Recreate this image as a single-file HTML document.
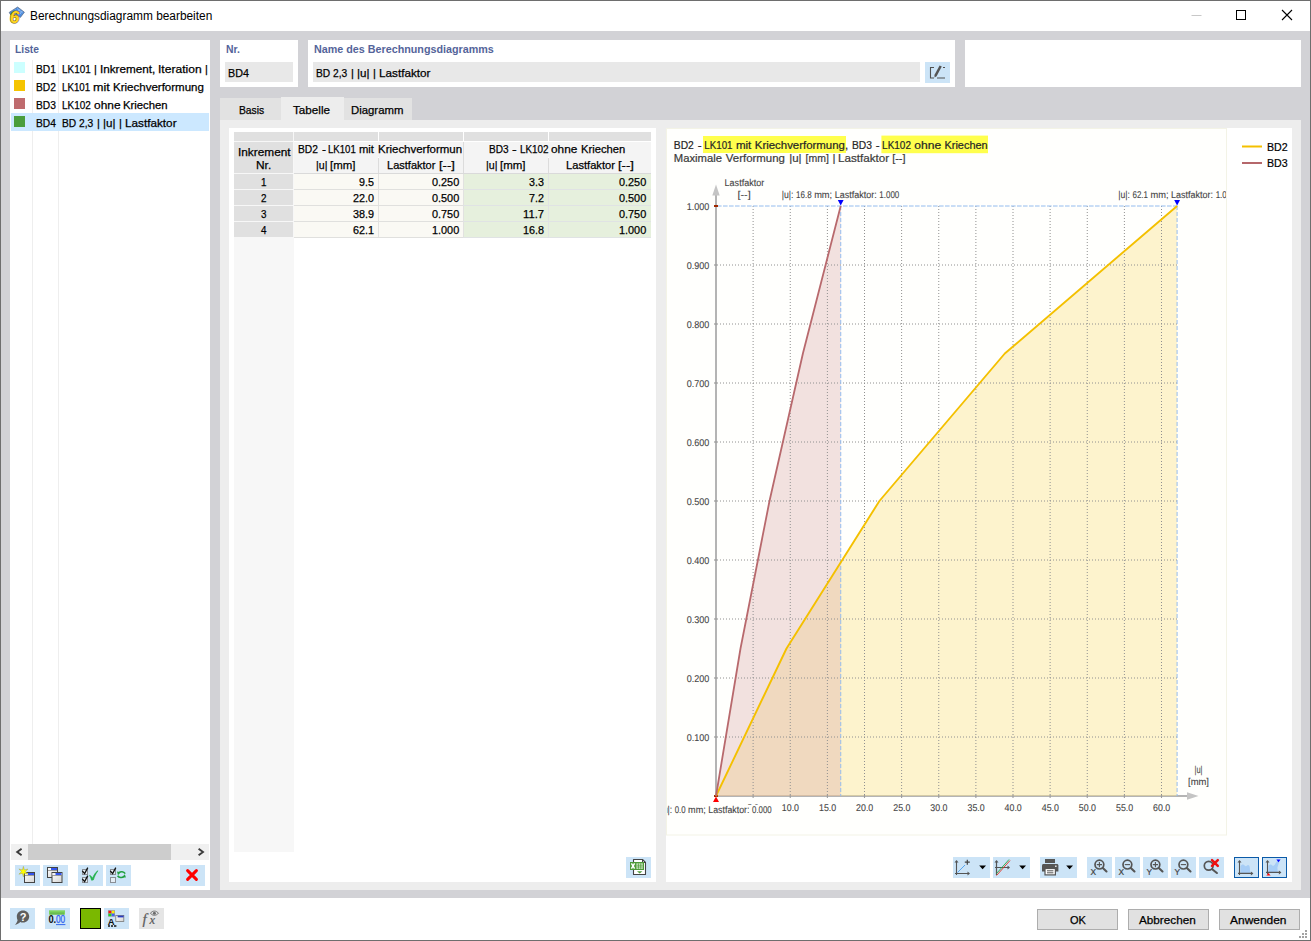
<!DOCTYPE html>
<html lang="de">
<head>
<meta charset="utf-8">
<title>Berechnungsdiagramm bearbeiten</title>
<style>
*{box-sizing:border-box;margin:0;padding:0}
html,body{width:1311px;height:941px;overflow:hidden;background:#fff}
body{font-family:"Liberation Sans",sans-serif;font-size:11.5px;color:#000;position:relative}
.a{position:absolute}
#win{position:absolute;left:0;top:0;width:1311px;height:941px;background:#fff;overflow:hidden}
#main{position:absolute;left:1px;top:31px;width:1309px;height:867px;background:#d2d2d6}
.p{position:absolute;background:#fff}
.t{position:absolute;white-space:nowrap;line-height:16px;height:16px;-webkit-text-stroke:0.25px currentColor}
.w{display:inline-block;transform-origin:0 0;vertical-align:baseline}
.b{font-weight:bold;-webkit-text-stroke:0}
.ns{-webkit-text-stroke:0}
.lbl{color:#54649a}
.inp{position:absolute;background:#e8e8e8;height:20px}
.btn{position:absolute;background:#cce4f7;width:25px;height:21px}
.btn svg,.ic svg{position:absolute;left:0;top:0}
.pbtn{position:absolute;top:909px;width:81px;height:21px;background:#e1e1e1;border:1px solid #adadad}
.tab{position:absolute;top:98px;height:22px;background:#e2e2e2}
.row{position:absolute;left:11px;width:198px;height:18px}
.sq{position:absolute;left:14px;width:11px;height:11px}
.hc{position:absolute;background:#f4f4f4}
.rc{position:absolute;background:#e0e0e0}
.c1{position:absolute;background:#faf9f4}
.c2{position:absolute;background:#e6f0dd}
svg text{font-family:"Liberation Sans",sans-serif;stroke-width:.22px}
svg text.sm{stroke-width:.1px;text-rendering:geometricPrecision}
svg text.sf{font-family:"Liberation Serif",serif}
</style>
</head>
<body>
<div id="win">
<!-- title bar -->
<div class="a ic" id="appicon" style="left:8px;top:6px;width:18px;height:18px"><svg width="18" height="18" viewBox="0 0 18 18"><path d="M1.2 6.4L9.6 1L16.4 6.2L12.4 11.4L8 8.6L3 9.4Z" fill="#4a8be0" stroke="#5a6a80" stroke-width="0.7" stroke-linejoin="round"/><path d="M4.6 5.2L11 8.6M6.8 3.6L13.2 8M9 2.4L14.6 6.8M12.2 3.4L7 7.6M14.4 5L10 9.4" stroke="#a8ccf4" stroke-width="0.7" fill="none"/><text x="1.8" y="16.7" font-size="17" font-weight="bold" font-style="italic" fill="#ffd51e" stroke="#6e5c14" style="stroke-width:1.1px" paint-order="stroke">6</text></svg></div>
<div class="t ns" style="left:30.40px;top:7.84px;font-size:12px"><span class="w" style="width:182.20px;transform:scaleX(0.990)">Berechnungsdiagramm bearbeiten</span></div>
<svg class="a" style="left:1180px;top:1px;width:130px;height:30px" viewBox="0 0 130 30"><path d="M11.5 14.5h10" stroke="#c8c8c8" stroke-width="1" fill="none"/><rect x="56.5" y="9.5" width="9" height="9" stroke="#000" stroke-width="1" fill="none"/><path d="M102 9l10 10M112 9l-10 10" stroke="#000" stroke-width="1.1" fill="none"/></svg>
<div id="main"></div>
<!-- list panel -->
<div class="p" style="left:10px;top:40px;width:200px;height:850px"></div>
<div class="t b lbl" style="left:15.00px;top:41.12px;font-size:11.2px"><span class="w" style="width:24.00px;transform:scaleX(0.918)">Liste</span></div>
<div class="a" style="left:32px;top:60px;width:1px;height:784px;background:#eeeeee"></div>
<div class="a" style="left:58px;top:60px;width:1px;height:784px;background:#eeeeee"></div>
<div class="row" style="top:113px;background:#cce8ff"></div>
<div class="sq" style="top:62px;background:#ccffff"></div>
<div class="t" style="left:35.70px;top:61.02px"><span class="w" style="width:19.90px;transform:scaleX(0.890)">BD1</span></div>
<div class="t" style="left:61.70px;top:61.02px"><span class="w" style="width:28.70px;transform:scaleX(0.863)">LK101</span> <span class="w" style="margin-left:0.04px;width:2.82px;transform:scaleX(0.945)">|</span> <span class="w" style="margin-left:0.04px;width:55.29px;transform:scaleX(1.018)">Inkrement,</span> <span class="w" style="margin-left:0.04px;width:43.63px;transform:scaleX(1.050)">Iteration</span> <span class="w" style="margin-left:0.04px;width:2.82px;transform:scaleX(0.945)">|</span></div>
<div class="sq" style="top:80px;background:#f5c400"></div>
<div class="t" style="left:35.70px;top:79.02px"><span class="w" style="width:19.90px;transform:scaleX(0.890)">BD2</span></div>
<div class="t" style="left:61.70px;top:79.02px"><span class="w" style="width:28.17px;transform:scaleX(0.847)">LK101</span> <span class="w" style="margin-left:-0.02px;width:16.70px;transform:scaleX(1.090)">mit</span> <span class="w" style="margin-left:-0.02px;width:90.98px;transform:scaleX(1.002)">Kriechverformung</span></div>
<div class="sq" style="top:98px;background:#bf6b6e"></div>
<div class="t" style="left:35.70px;top:97.02px"><span class="w" style="width:19.90px;transform:scaleX(0.890)">BD3</span></div>
<div class="t" style="left:61.70px;top:97.02px"><span class="w" style="width:28.79px;transform:scaleX(0.866)">LK102</span> <span class="w" style="margin-left:0.05px;width:26.51px;transform:scaleX(1.036)">ohne</span> <span class="w" style="margin-left:0.05px;width:44.61px;transform:scaleX(0.983)">Kriechen</span></div>
<div class="sq" style="top:116px;background:#4a9d3c"></div>
<div class="t" style="left:35.70px;top:115.02px"><span class="w" style="width:19.90px;transform:scaleX(0.890)">BD4</span></div>
<div class="t" style="left:61.70px;top:115.02px"><span class="w" style="width:14.21px;transform:scaleX(0.890)">BD</span> <span class="w" style="margin-left:0.09px;width:14.23px;transform:scaleX(0.890)">2,3</span> <span class="w" style="margin-left:0.09px;width:2.87px;transform:scaleX(0.960)">|</span> <span class="w" style="margin-left:0.09px;width:12.52px;transform:scaleX(1.012)">|u|</span> <span class="w" style="margin-left:0.09px;width:2.87px;transform:scaleX(0.960)">|</span> <span class="w" style="margin-left:0.09px;width:51.57px;transform:scaleX(1.021)">Lastfaktor</span></div>
<div class="a" style="left:11px;top:844px;width:198px;height:16px;background:#f0f0f0"></div>
<div class="a" style="left:28px;top:844px;width:143px;height:16px;background:#cdcdcd"></div>
<svg class="a" style="left:11px;top:844px;width:198px;height:16px" viewBox="0 0 198 16"><path d="M10.6 4.7L6.2 8l4.4 3.3M187.6 4.7L192 8l-4.4 3.3" stroke="#3c3c3c" stroke-width="1.9" fill="none"/></svg>
<div class="btn" style="left:15px;top:865px"><svg width="25" height="21" viewBox="0 0 25 21"><defs><linearGradient id="wg" x1="0" y1="0" x2="1" y2="1"><stop offset="0" stop-color="#ffffff"/><stop offset="1" stop-color="#d4d4d4"/></linearGradient></defs><rect x="9.5" y="7.5" width="10" height="10" fill="url(#wg)" stroke="#444" stroke-width="1"/><rect x="10" y="8" width="9" height="2" fill="#f4f4f4"/><rect x="13" y="8" width="6" height="2" fill="#3355ee"/><rect x="10" y="10" width="9" height="0.6" fill="#666"/><polygon points="8.40,1.40 9.35,4.95 12.90,4.00 10.30,6.60 12.90,9.20 9.35,8.25 8.40,11.80 7.45,8.25 3.90,9.20 6.50,6.60 3.90,4.00 7.45,4.95" fill="#ffff00" stroke="#a0a050" stroke-width="0.5"/></svg></div>
<div class="btn" style="left:43px;top:865px"><svg width="25" height="21" viewBox="0 0 25 21"><defs><linearGradient id="wg" x1="0" y1="0" x2="1" y2="1"><stop offset="0" stop-color="#ffffff"/><stop offset="1" stop-color="#d4d4d4"/></linearGradient></defs><rect x="4.5" y="2.5" width="10" height="10" fill="url(#wg)" stroke="#444" stroke-width="1"/><rect x="5" y="3" width="9" height="2" fill="#f4f4f4"/><rect x="8" y="3" width="6" height="2" fill="#3355ee"/><rect x="5" y="5" width="9" height="0.6" fill="#666"/><rect x="9.0" y="7.5" width="10" height="10" fill="url(#wg)" stroke="#444" stroke-width="1"/><rect x="9.5" y="8" width="9" height="2" fill="#f4f4f4"/><rect x="12.5" y="8" width="6" height="2" fill="#3355ee"/><rect x="9.5" y="10" width="9" height="0.6" fill="#666"/></svg></div>
<div class="btn" style="left:78px;top:865px"><svg width="25" height="21" viewBox="0 0 25 21"><rect x="4.5" y="4.5" width="5" height="5" fill="#e4edf5" stroke="#8a8f96" stroke-width="1"/><path d="M4.3 5.8L6.6 8.6L9.8 2.6" stroke="#111" stroke-width="1.3" fill="none"/><rect x="4.5" y="12.5" width="5" height="5" fill="#e4edf5" stroke="#8a8f96" stroke-width="1"/><path d="M4.3 13.8L6.6 16.6L9.8 10.6" stroke="#111" stroke-width="1.3" fill="none"/><path d="M11.6 10.4C13 10.8 14 12 14.6 13.4C15.6 10.4 17.4 7.6 19.8 5.8C17.6 9 16.2 12 15.4 14.8L13.6 15.2C13.2 13.4 12.6 11.8 11.6 10.4Z" fill="#22b14c" stroke="#22b14c" stroke-width="0.8" stroke-linejoin="round"/></svg></div>
<div class="btn" style="left:106px;top:865px"><svg width="25" height="21" viewBox="0 0 25 21"><rect x="4.5" y="4.5" width="5" height="5" fill="#e4edf5" stroke="#8a8f96" stroke-width="1"/><path d="M4.3 5.8L6.6 8.6L9.8 2.6" stroke="#111" stroke-width="1.3" fill="none"/><rect x="4.5" y="12.5" width="5" height="5" fill="#e4edf5" stroke="#8a8f96" stroke-width="1"/><path d="M19.2 8.6C17.8 6.4 14.6 6.2 12.8 7.8" stroke="#22a040" stroke-width="1.6" fill="none"/><path d="M11 6.6L14.6 7.2L12 10.2Z" fill="#22a040"/><path d="M11.6 10.8C13 12.8 16.2 13 18 11.4" stroke="#22a040" stroke-width="1.6" fill="none"/><path d="M19.9 12.6L16.2 12.2L18.8 9.2Z" fill="#22a040"/></svg></div>
<div class="btn" style="left:180px;top:865px"><svg width="25" height="21" viewBox="0 0 25 21"><path d="M7.6 5.6L16.4 14.4M16.4 5.6L7.6 14.4" stroke="#ff0000" stroke-width="3" stroke-linecap="round" fill="none"/></svg></div>
<!-- header fields -->
<div class="p" style="left:220px;top:40px;width:78px;height:47px"></div>
<div class="t b lbl" style="left:225.70px;top:41.12px;font-size:11.2px"><span class="w" style="width:13.90px;transform:scaleX(0.930)">Nr.</span></div>
<div class="inp" style="left:225px;top:62px;width:68px"></div>
<div class="t" style="left:227.70px;top:65.02px"><span class="w" style="width:20.90px;transform:scaleX(0.934)">BD4</span></div>
<div class="p" style="left:308px;top:40px;width:647px;height:47px"></div>
<div class="t b lbl" style="left:313.70px;top:41.12px;font-size:11.2px"><span class="w" style="width:180.10px;transform:scaleX(0.961)">Name des Berechnungsdiagramms</span></div>
<div class="inp" style="left:313px;top:62px;width:607px"></div>
<div class="t" style="left:315.70px;top:65.02px"><span class="w" style="width:14.17px;transform:scaleX(0.887)">BD</span> <span class="w" style="margin-left:0.08px;width:14.20px;transform:scaleX(0.888)">2,3</span> <span class="w" style="margin-left:0.08px;width:2.86px;transform:scaleX(0.958)">|</span> <span class="w" style="margin-left:0.08px;width:12.49px;transform:scaleX(1.009)">|u|</span> <span class="w" style="margin-left:0.08px;width:2.86px;transform:scaleX(0.958)">|</span> <span class="w" style="margin-left:0.08px;width:51.44px;transform:scaleX(1.019)">Lastfaktor</span></div>
<div class="btn" style="left:925px;top:62px"><svg width="25" height="21" viewBox="0 0 25 21"><path d="M9 5.5H5.5V16H9" stroke="#505050" stroke-width="1.1" fill="none"/><path d="M12 16H20M18 5.5H20" stroke="#505050" stroke-width="1.1" fill="none"/><path d="M14.6 3.4L16.8 4.6L11.6 14.2L9.6 15.6L9.4 13Z" fill="#555"/></svg></div>
<div class="p" style="left:965px;top:40px;width:336px;height:47px"></div>
<!-- tabs -->
<div class="tab" style="left:220px;width:61px"></div>
<div class="tab" style="left:281px;width:63px;top:97px;height:23px;background:#ededed"></div>
<div class="tab" style="left:344px;width:68px"></div>
<div class="t" style="left:238.90px;top:101.72px"><span class="w" style="width:25.20px;transform:scaleX(0.896)">Basis</span></div>
<div class="t" style="left:293.40px;top:101.72px"><span class="w" style="width:37.00px;transform:scaleX(1.015)">Tabelle</span></div>
<div class="t" style="left:350.70px;top:101.72px"><span class="w" style="width:52.40px;transform:scaleX(0.988)">Diagramm</span></div>
<div class="a" style="left:220px;top:120px;width:1081px;height:770px;background:#ededed"></div>
<!-- table -->
<div class="p" style="left:229px;top:128px;width:427px;height:754px"></div>
<div class="a" style="left:234px;top:132px;width:60px;height:720px;background:#f7f7f7"></div>
<div class="a" style="left:234px;top:132px;width:59px;height:9px;background:#e0e0e0"></div>
<div class="a" style="left:294px;top:132px;width:84px;height:9px;background:#e0e0e0"></div>
<div class="a" style="left:379px;top:132px;width:84px;height:9px;background:#e0e0e0"></div>
<div class="a" style="left:464px;top:132px;width:84px;height:9px;background:#e0e0e0"></div>
<div class="a" style="left:549px;top:132px;width:102px;height:9px;background:#e0e0e0"></div>
<div class="rc" style="left:234px;top:142px;width:59px;height:31px"></div>
<div class="hc" style="left:294px;top:142px;width:169px;height:15px"></div>
<div class="hc" style="left:464px;top:142px;width:187px;height:15px"></div>
<div class="hc" style="left:294px;top:157px;width:84px;height:16px"></div>
<div class="hc" style="left:379px;top:157px;width:84px;height:16px"></div>
<div class="hc" style="left:464px;top:157px;width:84px;height:16px"></div>
<div class="hc" style="left:549px;top:157px;width:102px;height:16px"></div>
<div class="a" style="left:378px;top:158px;width:1px;height:15px;background:#dcdcdc"></div>
<div class="a" style="left:548px;top:158px;width:1px;height:15px;background:#dcdcdc"></div>
<div class="a" style="left:463px;top:142px;width:1px;height:31px;background:#dcdcdc"></div>
<div class="a" style="left:294px;top:173px;width:357px;height:1px;background:#dadada"></div>
<div class="t" style="left:237.70px;top:143.52px"><span class="w" style="width:52.60px;transform:scaleX(1.029)">Inkrement</span></div>
<div class="t" style="left:255.70px;top:156.82px"><span class="w" style="width:15.20px;transform:scaleX(1.034)">Nr.</span></div>
<div class="a" style="left:294px;top:142px;width:168.4px;height:16px;overflow:hidden"><div class="t" style="left:3.70px;top:-1.48px"><span class="w" style="width:19.90px;transform:scaleX(0.890)">BD2</span> <span class="w" style="margin-left:0.80px;width:4.00px;transform:scaleX(1.044)">-</span> <span class="w" style="margin-left:-0.70px;width:27.80px;transform:scaleX(0.836)">LK101</span> <span class="w" style="margin-left:0.30px;width:15.00px;transform:scaleX(0.978)">mit</span> <span class="w" style="margin-left:0.50px;width:90.50px;transform:scaleX(0.997)">Kriechverformung</span></div></div>
<div class="t" style="left:488.90px;top:140.52px"><span class="w" style="width:19.58px;transform:scaleX(0.875)">BD3</span> <span class="w" style="margin-left:0.02px;width:4.69px;transform:scaleX(1.224)">-</span> <span class="w" style="margin-left:0.02px;width:28.52px;transform:scaleX(0.858)">LK102</span> <span class="w" style="margin-left:0.02px;width:26.27px;transform:scaleX(1.027)">ohne</span> <span class="w" style="margin-left:0.02px;width:44.19px;transform:scaleX(0.974)">Kriechen</span></div>
<div class="t" style="left:315.90px;top:156.82px"><span class="w" style="width:11.38px;transform:scaleX(0.920)">|u|</span> <span class="w" style="margin-left:-0.21px;width:25.34px;transform:scaleX(0.992)">[mm]</span></div>
<div class="t" style="left:387.20px;top:156.82px"><span class="w" style="width:48.43px;transform:scaleX(0.959)">Lastfaktor</span> <span class="w" style="margin-left:-0.11px;width:15.79px;transform:scaleX(1.124)">[--]</span></div>
<div class="t" style="left:485.70px;top:156.82px"><span class="w" style="width:11.43px;transform:scaleX(0.924)">|u|</span> <span class="w" style="margin-left:-0.20px;width:25.47px;transform:scaleX(0.997)">[mm]</span></div>
<div class="t" style="left:565.70px;top:156.82px"><span class="w" style="width:48.86px;transform:scaleX(0.968)">Lastfaktor</span> <span class="w" style="margin-left:-0.08px;width:15.93px;transform:scaleX(1.134)">[--]</span></div>
<div class="rc" style="left:234px;top:174px;width:59px;height:15px"></div>
<div class="c1" style="left:294px;top:174px;width:84px;height:15px"></div>
<div class="c1" style="left:379px;top:174px;width:84px;height:15px"></div>
<div class="c2" style="left:464px;top:174px;width:84px;height:15px"></div>
<div class="c2" style="left:549px;top:174px;width:102px;height:15px"></div>
<div class="a" style="left:378px;top:174px;width:1px;height:15px;background:#e2e2e0"></div>
<div class="a" style="left:463px;top:174px;width:1px;height:15px;background:#e2e2e0"></div>
<div class="a" style="left:548px;top:174px;width:1px;height:15px;background:#e0e3e4"></div>
<div class="a" style="left:294px;top:189px;width:169px;height:1px;background:#e0e0de"></div>
<div class="a" style="left:463px;top:189px;width:188px;height:1px;background:#e0e3e4"></div>
<div class="t" style="left:260.96px;top:173.62px"><span class="w" style="width:5.48px;transform:scaleX(0.857)">1</span></div>
<div class="t" style="left:358.80px;top:173.62px"><span class="w" style="width:14.90px;transform:scaleX(0.932)">9.5</span></div>
<div class="t" style="left:432.20px;top:173.62px"><span class="w" style="width:27.20px;transform:scaleX(0.945)">0.250</span></div>
<div class="t" style="left:529.30px;top:173.62px"><span class="w" style="width:14.90px;transform:scaleX(0.932)">3.3</span></div>
<div class="t" style="left:619.40px;top:173.62px"><span class="w" style="width:27.20px;transform:scaleX(0.945)">0.250</span></div>
<div class="rc" style="left:234px;top:190px;width:59px;height:15px"></div>
<div class="c1" style="left:294px;top:190px;width:84px;height:15px"></div>
<div class="c1" style="left:379px;top:190px;width:84px;height:15px"></div>
<div class="c2" style="left:464px;top:190px;width:84px;height:15px"></div>
<div class="c2" style="left:549px;top:190px;width:102px;height:15px"></div>
<div class="a" style="left:378px;top:190px;width:1px;height:15px;background:#e2e2e0"></div>
<div class="a" style="left:463px;top:190px;width:1px;height:15px;background:#e2e2e0"></div>
<div class="a" style="left:548px;top:190px;width:1px;height:15px;background:#e0e3e4"></div>
<div class="a" style="left:294px;top:205px;width:169px;height:1px;background:#e0e0de"></div>
<div class="a" style="left:463px;top:205px;width:188px;height:1px;background:#e0e3e4"></div>
<div class="t" style="left:260.96px;top:189.62px"><span class="w" style="width:5.48px;transform:scaleX(0.857)">2</span></div>
<div class="t" style="left:352.65px;top:189.62px"><span class="w" style="width:21.05px;transform:scaleX(0.940)">22.0</span></div>
<div class="t" style="left:432.20px;top:189.62px"><span class="w" style="width:27.20px;transform:scaleX(0.945)">0.500</span></div>
<div class="t" style="left:529.30px;top:189.62px"><span class="w" style="width:14.90px;transform:scaleX(0.932)">7.2</span></div>
<div class="t" style="left:619.40px;top:189.62px"><span class="w" style="width:27.20px;transform:scaleX(0.945)">0.500</span></div>
<div class="rc" style="left:234px;top:206px;width:59px;height:15px"></div>
<div class="c1" style="left:294px;top:206px;width:84px;height:15px"></div>
<div class="c1" style="left:379px;top:206px;width:84px;height:15px"></div>
<div class="c2" style="left:464px;top:206px;width:84px;height:15px"></div>
<div class="c2" style="left:549px;top:206px;width:102px;height:15px"></div>
<div class="a" style="left:378px;top:206px;width:1px;height:15px;background:#e2e2e0"></div>
<div class="a" style="left:463px;top:206px;width:1px;height:15px;background:#e2e2e0"></div>
<div class="a" style="left:548px;top:206px;width:1px;height:15px;background:#e0e3e4"></div>
<div class="a" style="left:294px;top:221px;width:169px;height:1px;background:#e0e0de"></div>
<div class="a" style="left:463px;top:221px;width:188px;height:1px;background:#e0e3e4"></div>
<div class="t" style="left:260.96px;top:205.62px"><span class="w" style="width:5.48px;transform:scaleX(0.857)">3</span></div>
<div class="t" style="left:352.65px;top:205.62px"><span class="w" style="width:21.05px;transform:scaleX(0.940)">38.9</span></div>
<div class="t" style="left:432.20px;top:205.62px"><span class="w" style="width:27.20px;transform:scaleX(0.945)">0.750</span></div>
<div class="t" style="left:523.15px;top:205.62px"><span class="w" style="width:21.05px;transform:scaleX(0.978)">11.7</span></div>
<div class="t" style="left:619.40px;top:205.62px"><span class="w" style="width:27.20px;transform:scaleX(0.945)">0.750</span></div>
<div class="rc" style="left:234px;top:222px;width:59px;height:15px"></div>
<div class="c1" style="left:294px;top:222px;width:84px;height:15px"></div>
<div class="c1" style="left:379px;top:222px;width:84px;height:15px"></div>
<div class="c2" style="left:464px;top:222px;width:84px;height:15px"></div>
<div class="c2" style="left:549px;top:222px;width:102px;height:15px"></div>
<div class="a" style="left:378px;top:222px;width:1px;height:15px;background:#e2e2e0"></div>
<div class="a" style="left:463px;top:222px;width:1px;height:15px;background:#e2e2e0"></div>
<div class="a" style="left:548px;top:222px;width:1px;height:15px;background:#e0e3e4"></div>
<div class="a" style="left:294px;top:237px;width:169px;height:1px;background:#e0e0de"></div>
<div class="a" style="left:463px;top:237px;width:188px;height:1px;background:#e0e3e4"></div>
<div class="t" style="left:260.96px;top:221.62px"><span class="w" style="width:5.48px;transform:scaleX(0.857)">4</span></div>
<div class="t" style="left:352.65px;top:221.62px"><span class="w" style="width:21.05px;transform:scaleX(0.940)">62.1</span></div>
<div class="t" style="left:432.20px;top:221.62px"><span class="w" style="width:27.20px;transform:scaleX(0.945)">1.000</span></div>
<div class="t" style="left:523.15px;top:221.62px"><span class="w" style="width:21.05px;transform:scaleX(0.940)">16.8</span></div>
<div class="t" style="left:619.40px;top:221.62px"><span class="w" style="width:27.20px;transform:scaleX(0.945)">1.000</span></div>
<div class="btn" style="left:626px;top:857px"><svg width="25" height="21" viewBox="0 0 25 21"><path d="M7.5 2.5H16.5L19.5 5.5V17.5H7.5Z" fill="#fff" stroke="#444" stroke-width="1.1" stroke-linejoin="round"/><path d="M16.5 2.5V5.5H19.5" fill="none" stroke="#444" stroke-width="1"/><rect x="4" y="5" width="14" height="8" fill="#4e9a38"/><path d="M5.4 6.4L8.6 11.6M8.6 6.4L5.4 11.6" stroke="#fff" stroke-width="1.5" fill="none"/><rect x="10.4" y="6.4" width="6.4" height="5.4" fill="#d8ecd0"/><path d="M10.4 8.2h6.4M10.4 10h6.4M12.5 6.4v5.4M14.7 6.4v5.4" stroke="#4e9a38" stroke-width="0.7" fill="none"/><path d="M11 14.2H16.4L13.7 16.6Z" fill="#4e9a38"/></svg></div>
<!-- chart -->
<div class="p" style="left:666px;top:128px;width:626px;height:754px"></div>
<svg class="a" style="left:666px;top:128px;width:626px;height:754px" viewBox="666 128 626 754">
<rect x="666.5" y="128.5" width="560" height="706.5" fill="#fffffd" stroke="#f3f3e6" stroke-width="1"/>
<clipPath id="cc"><rect x="667" y="129" width="559" height="705"/></clipPath>
<rect x="703" y="136" width="143" height="17" fill="#ffff4d"/>
<rect x="881.4" y="135.6" width="106.6" height="17.6" fill="#ffff4d"/>
<text y="148.60" font-size="11.5" fill="#262626" stroke="#262626"><tspan x="673.80" textLength="20.00" lengthAdjust="spacingAndGlyphs">BD2</tspan> <tspan x="697.64">-</tspan> <tspan x="704.30" textLength="28.20" lengthAdjust="spacingAndGlyphs">LK101</tspan> <tspan x="735.90" textLength="15.40" lengthAdjust="spacingAndGlyphs">mit</tspan> <tspan x="754.80" textLength="93.30" lengthAdjust="spacingAndGlyphs">Kriechverformung,</tspan> <tspan x="851.90" textLength="20.00" lengthAdjust="spacingAndGlyphs">BD3</tspan> <tspan x="875.79">-</tspan> <tspan x="882.10" textLength="28.90" lengthAdjust="spacingAndGlyphs">LK102</tspan> <tspan x="914.30" textLength="26.90" lengthAdjust="spacingAndGlyphs">ohne</tspan> <tspan x="944.50" textLength="43.10" lengthAdjust="spacingAndGlyphs">Kriechen</tspan></text>
<text y="162.20" font-size="11.5" fill="#3c3c3c" stroke="#3c3c3c"><tspan x="673.80" textLength="48.20" lengthAdjust="spacingAndGlyphs">Maximale</tspan> <tspan x="725.80" textLength="59.10" lengthAdjust="spacingAndGlyphs">Verformung</tspan> <tspan x="789.20" textLength="12.40" lengthAdjust="spacingAndGlyphs">|u|</tspan> <tspan x="805.50" textLength="23.30" lengthAdjust="spacingAndGlyphs">[mm]</tspan> <tspan x="832.41">|</tspan> <tspan x="838.00" textLength="51.20" lengthAdjust="spacingAndGlyphs">Lastfaktor</tspan> <tspan x="892.20" textLength="13.30" lengthAdjust="spacingAndGlyphs">[--]</tspan></text>
<path d="M1242 146.5h20" stroke="#f4c000" stroke-width="2"/>
<path d="M1242 163h20" stroke="#b5676b" stroke-width="2"/>
<text y="151.00" font-size="11.5" fill="#000" stroke="#000"><tspan x="1266.90" textLength="20.70" lengthAdjust="spacingAndGlyphs">BD2</tspan></text>
<text y="167.00" font-size="11.5" fill="#000" stroke="#000"><tspan x="1266.90" textLength="20.70" lengthAdjust="spacingAndGlyphs">BD3</tspan></text>
<g clip-path="url(#cc)">
<path d="M716.0 194V797.0" stroke="#b4b4b4" stroke-width="2" fill="none"/>
<path d="M715.0 796.0H1188" stroke="#b4b4b4" stroke-width="2" fill="none"/>
<polygon points="716.0,184.5 712.3,195.5 719.7,195.5" fill="#c4c4c4"/>
<polygon points="1198.5,796.0 1187,792.2 1187,799.8" fill="#c4c4c4"/>
<polygon points="716.0,796.0 786.5,648.5 879.4,501.0 1004.8,353.5 1177.1,206.0 1177.1,796.0" fill="#fbe596" fill-opacity="0.47"/>
<polygon points="716.0,796.0 740.5,648.5 769.5,501.0 802.9,353.5 840.7,206.0 840.7,796.0" fill="#d9a3a5" fill-opacity="0.33"/>
<path d="M753.12 206V796.0 M790.25 206V796.0 M827.38 206V796.0 M864.50 206V796.0 M901.62 206V796.0 M938.75 206V796.0 M975.88 206V796.0 M1013.00 206V796.0 M1050.12 206V796.0 M1087.25 206V796.0 M1124.38 206V796.0 M1161.50 206V796.0" stroke="#909090" stroke-width="1" stroke-dasharray="1 2" fill="none"/>
<path d="M717 737.00H1177.1 M717 678.00H1177.1 M717 619.00H1177.1 M717 560.00H1177.1 M717 501.00H1177.1 M717 442.00H1177.1 M717 383.00H1177.1 M717 324.00H1177.1 M717 265.00H1177.1" stroke="#909090" stroke-width="1" stroke-dasharray="1 2" fill="none"/>
<path d="M717 206.00H1177.6" stroke="#94bcee" stroke-width="1" stroke-dasharray="4.6 1.4" fill="none"/>
<path d="M840.74 206V796.0M1177.09 206V796.0" stroke="#94bcee" stroke-width="1" stroke-dasharray="4 2" fill="none"/>
<path d="M714.0 737.0h3" stroke="#9c9c9c" stroke-width="1.2"/>
<path d="M714.0 678.0h3" stroke="#9c9c9c" stroke-width="1.2"/>
<path d="M714.0 619.0h3" stroke="#9c9c9c" stroke-width="1.2"/>
<path d="M714.0 560.0h3" stroke="#9c9c9c" stroke-width="1.2"/>
<path d="M714.0 501.0h3" stroke="#9c9c9c" stroke-width="1.2"/>
<path d="M714.0 442.0h3" stroke="#9c9c9c" stroke-width="1.2"/>
<path d="M714.0 383.0h3" stroke="#9c9c9c" stroke-width="1.2"/>
<path d="M714.0 324.0h3" stroke="#9c9c9c" stroke-width="1.2"/>
<path d="M714.0 265.0h3" stroke="#9c9c9c" stroke-width="1.2"/>
<path d="M753.12 795.0v3" stroke="#9c9c9c" stroke-width="1.1"/>
<path d="M790.25 795.0v3" stroke="#9c9c9c" stroke-width="1.1"/>
<path d="M827.38 795.0v3" stroke="#9c9c9c" stroke-width="1.1"/>
<path d="M864.50 795.0v3" stroke="#9c9c9c" stroke-width="1.1"/>
<path d="M901.62 795.0v3" stroke="#9c9c9c" stroke-width="1.1"/>
<path d="M938.75 795.0v3" stroke="#9c9c9c" stroke-width="1.1"/>
<path d="M975.88 795.0v3" stroke="#9c9c9c" stroke-width="1.1"/>
<path d="M1013.00 795.0v3" stroke="#9c9c9c" stroke-width="1.1"/>
<path d="M1050.12 795.0v3" stroke="#9c9c9c" stroke-width="1.1"/>
<path d="M1087.25 795.0v3" stroke="#9c9c9c" stroke-width="1.1"/>
<path d="M1124.38 795.0v3" stroke="#9c9c9c" stroke-width="1.1"/>
<path d="M1161.50 795.0v3" stroke="#9c9c9c" stroke-width="1.1"/>
<rect x="714.0" y="205.0" width="4" height="2" fill="#a02800"/>
<rect x="714.0" y="795.0" width="4" height="2" fill="#a02800"/>
<polyline points="716.0,796.0 786.5,648.5 879.4,501.0 1004.8,353.5 1177.1,206.0" stroke="#f4c000" stroke-width="1.9" fill="none" stroke-linejoin="round"/>
<polyline points="716.0,796.0 740.5,648.5 769.5,501.0 802.9,353.5 840.7,206.0" stroke="#b8696d" stroke-width="1.8" fill="none" stroke-linejoin="round"/>
<polygon points="837.8,200 843.6,200 840.7,205.4" fill="#0000ff"/>
<polygon points="1174.2,200 1180.0,200 1177.1,205.4" fill="#0000ff"/>
<polygon points="713.0,802 719.0,802 716.0,796.5" fill="#ff0000"/>
<text y="741.20" font-size="9.8" fill="#444" stroke="#444" class="sm"><tspan x="686.70" textLength="22.60" lengthAdjust="spacingAndGlyphs">0.100</tspan></text>
<text y="682.20" font-size="9.8" fill="#444" stroke="#444" class="sm"><tspan x="686.70" textLength="22.60" lengthAdjust="spacingAndGlyphs">0.200</tspan></text>
<text y="623.20" font-size="9.8" fill="#444" stroke="#444" class="sm"><tspan x="686.70" textLength="22.60" lengthAdjust="spacingAndGlyphs">0.300</tspan></text>
<text y="564.20" font-size="9.8" fill="#444" stroke="#444" class="sm"><tspan x="686.70" textLength="22.60" lengthAdjust="spacingAndGlyphs">0.400</tspan></text>
<text y="505.20" font-size="9.8" fill="#444" stroke="#444" class="sm"><tspan x="686.70" textLength="22.60" lengthAdjust="spacingAndGlyphs">0.500</tspan></text>
<text y="446.20" font-size="9.8" fill="#444" stroke="#444" class="sm"><tspan x="686.70" textLength="22.60" lengthAdjust="spacingAndGlyphs">0.600</tspan></text>
<text y="387.20" font-size="9.8" fill="#444" stroke="#444" class="sm"><tspan x="686.70" textLength="22.60" lengthAdjust="spacingAndGlyphs">0.700</tspan></text>
<text y="328.20" font-size="9.8" fill="#444" stroke="#444" class="sm"><tspan x="686.70" textLength="22.60" lengthAdjust="spacingAndGlyphs">0.800</tspan></text>
<text y="269.20" font-size="9.8" fill="#444" stroke="#444" class="sm"><tspan x="686.70" textLength="22.60" lengthAdjust="spacingAndGlyphs">0.900</tspan></text>
<text y="210.20" font-size="9.8" fill="#444" stroke="#444" class="sm"><tspan x="686.70" textLength="22.60" lengthAdjust="spacingAndGlyphs">1.000</tspan></text>
<text y="811.00" font-size="9.8" fill="#444" stroke="#444" class="sm"><tspan x="747.62" textLength="11.00" lengthAdjust="spacingAndGlyphs">5.0</tspan></text>
<rect x="666" y="804.8" width="107" height="12" fill="#fffffd"/>
<text y="811.00" font-size="9.8" fill="#444" stroke="#444" class="sm"><tspan x="781.85" textLength="17.20" lengthAdjust="spacingAndGlyphs">10.0</tspan></text>
<text y="811.00" font-size="9.8" fill="#444" stroke="#444" class="sm"><tspan x="818.98" textLength="17.20" lengthAdjust="spacingAndGlyphs">15.0</tspan></text>
<text y="811.00" font-size="9.8" fill="#444" stroke="#444" class="sm"><tspan x="856.10" textLength="17.20" lengthAdjust="spacingAndGlyphs">20.0</tspan></text>
<text y="811.00" font-size="9.8" fill="#444" stroke="#444" class="sm"><tspan x="893.23" textLength="17.20" lengthAdjust="spacingAndGlyphs">25.0</tspan></text>
<text y="811.00" font-size="9.8" fill="#444" stroke="#444" class="sm"><tspan x="930.35" textLength="17.20" lengthAdjust="spacingAndGlyphs">30.0</tspan></text>
<text y="811.00" font-size="9.8" fill="#444" stroke="#444" class="sm"><tspan x="967.48" textLength="17.20" lengthAdjust="spacingAndGlyphs">35.0</tspan></text>
<text y="811.00" font-size="9.8" fill="#444" stroke="#444" class="sm"><tspan x="1004.60" textLength="17.20" lengthAdjust="spacingAndGlyphs">40.0</tspan></text>
<text y="811.00" font-size="9.8" fill="#444" stroke="#444" class="sm"><tspan x="1041.73" textLength="17.20" lengthAdjust="spacingAndGlyphs">45.0</tspan></text>
<text y="811.00" font-size="9.8" fill="#444" stroke="#444" class="sm"><tspan x="1078.85" textLength="17.20" lengthAdjust="spacingAndGlyphs">50.0</tspan></text>
<text y="811.00" font-size="9.8" fill="#444" stroke="#444" class="sm"><tspan x="1115.98" textLength="17.20" lengthAdjust="spacingAndGlyphs">55.0</tspan></text>
<text y="811.00" font-size="9.8" fill="#444" stroke="#444" class="sm"><tspan x="1153.10" textLength="17.20" lengthAdjust="spacingAndGlyphs">60.0</tspan></text>
<text y="812.70" font-size="9.8" fill="#444" stroke="#444" class="sm"><tspan x="660.70" textLength="11.51" lengthAdjust="spacingAndGlyphs">|u|:</tspan> <tspan x="674.71" textLength="10.84" lengthAdjust="spacingAndGlyphs">0.0</tspan> <tspan x="688.05" textLength="17.71" lengthAdjust="spacingAndGlyphs">mm;</tspan> <tspan x="708.26" textLength="41.25" lengthAdjust="spacingAndGlyphs">Lastfaktor:</tspan> <tspan x="752.00" textLength="19.70" lengthAdjust="spacingAndGlyphs">0.000</tspan></text>
<text y="198.20" font-size="9.8" fill="#444" stroke="#444" class="sm"><tspan x="781.80" textLength="11.72" lengthAdjust="spacingAndGlyphs">|u|:</tspan> <tspan x="796.06" textLength="15.54" lengthAdjust="spacingAndGlyphs">16.8</tspan> <tspan x="814.15" textLength="18.02" lengthAdjust="spacingAndGlyphs">mm;</tspan> <tspan x="834.72" textLength="41.99" lengthAdjust="spacingAndGlyphs">Lastfaktor:</tspan> <tspan x="879.25" textLength="20.05" lengthAdjust="spacingAndGlyphs">1.000</tspan></text>
<text y="198.20" font-size="9.8" fill="#444" stroke="#444" class="sm"><tspan x="1118.20" textLength="11.72" lengthAdjust="spacingAndGlyphs">|u|:</tspan> <tspan x="1132.46" textLength="15.54" lengthAdjust="spacingAndGlyphs">62.1</tspan> <tspan x="1150.55" textLength="18.02" lengthAdjust="spacingAndGlyphs">mm;</tspan> <tspan x="1171.12" textLength="41.99" lengthAdjust="spacingAndGlyphs">Lastfaktor:</tspan> <tspan x="1215.65" textLength="20.05" lengthAdjust="spacingAndGlyphs">1.000</tspan></text>
<text y="185.70" font-size="9.8" fill="#444" stroke="#444" class="sm"><tspan x="724.60" textLength="39.60" lengthAdjust="spacingAndGlyphs">Lastfaktor</tspan></text>
<text y="197.60" font-size="9.8" fill="#444" stroke="#444" class="sm"><tspan x="737.40" textLength="13.40" lengthAdjust="spacingAndGlyphs">[--]</tspan></text>
<text y="772.50" font-size="9.8" fill="#444" stroke="#444" class="sm"><tspan x="1194.50" textLength="8.00" lengthAdjust="spacingAndGlyphs">|u|</tspan></text>
<text y="784.50" font-size="9.8" fill="#444" stroke="#444" class="sm"><tspan x="1188.00" textLength="21.00" lengthAdjust="spacingAndGlyphs">[mm]</tspan></text>
</g>
</svg>
<div class="btn" style="left:953px;top:857px;width:37px"><svg width="37" height="21" viewBox="0 0 37 21"><path d="M3.5 4V18.0M2.0 16.5H16" stroke="#555" stroke-width="1.1" fill="none"/><path d="M1.5 5.5L3.5 3L5.5 5.5Z" fill="#555"/><path d="M14.5 14.5L17 16.5L14.5 18.5Z" fill="#555"/><path d="M4.5 15.5L12 8" stroke="#58a6f0" stroke-width="1" fill="none"/><path d="M11.8 5.2h5M14.3 2.7v5" stroke="#444" stroke-width="1.2" fill="none"/><path d="M26.2 8.4H33L29.6 12.2Z" fill="#000"/></svg></div>
<div class="btn" style="left:993px;top:857px;width:37px"><svg width="37" height="21" viewBox="0 0 37 21"><path d="M3.5 4V18M2 10.5H16" stroke="#555" stroke-width="1.2" fill="none"/><path d="M1.5 5.5L3.5 3L5.5 5.5Z" fill="#555"/><path d="M14.5 8.5L17 10.5L14.5 12.5Z" fill="#555"/><path d="M3.5 16.5L16 2.5" stroke="#22aa44" stroke-width="0.9" fill="none"/><path d="M3.5 18.5L17 3.5" stroke="#e03020" stroke-width="0.9" fill="none"/><path d="M26.2 8.4H33L29.6 12.2Z" fill="#000"/></svg></div>
<div class="btn" style="left:1040px;top:857px;width:37px"><svg width="37" height="21" viewBox="0 0 37 21"><rect x="5" y="2" width="10" height="4" fill="#555"/><path d="M3.5 7H16.9C17.8 7 18.4 7.6 18.4 8.5V14.4H2V8.5C2 7.6 2.6 7 3.5 7Z" fill="#555"/><rect x="15" y="8.6" width="1.6" height="1.2" fill="#fff"/><rect x="5" y="11.5" width="10.4" height="6.4" fill="#fff" stroke="#555" stroke-width="1.2"/><path d="M7 13.8h6.4M7 15.8h6.4" stroke="#555" stroke-width="1" fill="none"/><path d="M26.2 8.4H33L29.6 12.2Z" fill="#000"/></svg></div>
<div class="btn" style="left:1087px;top:857px"><svg width="25" height="21" viewBox="0 0 25 21"><circle cx="12.4" cy="7.6" r="4.4" fill="none" stroke="#555" stroke-width="1.7"/><path d="M15.8 11.0L19.5 14.5" stroke="#555" stroke-width="2.1" stroke-linecap="round" fill="none"/><path d="M9.8 7.6h5.2M12.4 5.0v5.2" stroke="#555" stroke-width="1.1" fill="none"/><text x="3.6" y="17.7" font-size="8.4" fill="#444" stroke="#444" stroke-width="0.3">X</text></svg></div>
<div class="btn" style="left:1115px;top:857px"><svg width="25" height="21" viewBox="0 0 25 21"><circle cx="12.4" cy="7.6" r="4.4" fill="none" stroke="#555" stroke-width="1.7"/><path d="M15.8 11.0L19.5 14.5" stroke="#555" stroke-width="2.1" stroke-linecap="round" fill="none"/><path d="M9.8 7.6h5.2" stroke="#555" stroke-width="1.1" fill="none"/><text x="3.6" y="17.7" font-size="8.4" fill="#444" stroke="#444" stroke-width="0.3">X</text></svg></div>
<div class="btn" style="left:1143px;top:857px"><svg width="25" height="21" viewBox="0 0 25 21"><circle cx="12.4" cy="7.6" r="4.4" fill="none" stroke="#555" stroke-width="1.7"/><path d="M15.8 11.0L19.5 14.5" stroke="#555" stroke-width="2.1" stroke-linecap="round" fill="none"/><path d="M9.8 7.6h5.2M12.4 5.0v5.2" stroke="#555" stroke-width="1.1" fill="none"/><text x="3.6" y="17.7" font-size="8.4" fill="#444" stroke="#444" stroke-width="0.3">Y</text></svg></div>
<div class="btn" style="left:1171px;top:857px"><svg width="25" height="21" viewBox="0 0 25 21"><circle cx="12.4" cy="7.6" r="4.4" fill="none" stroke="#555" stroke-width="1.7"/><path d="M15.8 11.0L19.5 14.5" stroke="#555" stroke-width="2.1" stroke-linecap="round" fill="none"/><path d="M9.8 7.6h5.2" stroke="#555" stroke-width="1.1" fill="none"/><text x="3.6" y="17.7" font-size="8.4" fill="#444" stroke="#444" stroke-width="0.3">Y</text></svg></div>
<div class="btn" style="left:1199px;top:857px"><svg width="25" height="21" viewBox="0 0 25 21"><circle cx="9.7" cy="8.7" r="4.4" fill="none" stroke="#555" stroke-width="1.7"/><path d="M13.2 12.2L17.9 16" stroke="#555" stroke-width="2.1" stroke-linecap="round" fill="none"/><path d="M13 3.2L18.8 8.8M18.8 3.2L13 8.8" stroke="#ee1111" stroke-width="2.5" stroke-linecap="round" fill="none"/></svg></div>
<div class="btn" style="left:1234px;top:857px;border:1px solid #0a5aa8"><svg width="23" height="19" viewBox="0 0 23 19" style="left:0;top:0"><path d="M5.5 15.4V8.4C6.4 6.4 8.4 6 9.6 7.6C10.4 8.6 11.2 8.6 12 7.6C13 6.4 14.4 7 14.8 9.4L15.2 15.4Z" fill="#a6cdf6"/><path d="M4.5 3V16.9M3.0 15.4H17.4" stroke="#555" stroke-width="1.1" fill="none"/><path d="M2.5 4.5L4.5 2L6.5 4.5Z" fill="#555"/><path d="M15.899999999999999 13.4L18.4 15.4L15.899999999999999 17.4Z" fill="#555"/></svg></div>
<div class="btn" style="left:1262px;top:857px;border:1px solid #0a5aa8"><svg width="23" height="19" viewBox="0 0 23 19" style="left:0;top:0"><path d="M5.5 14.4V8C6.6 6.2 8.2 6.2 9.4 7.4C10.6 8.4 11.6 7.4 12.4 5.6L14.6 2.4L16.4 3.4L14.4 9.4L14.8 14.4Z" fill="#a6cdf6"/><path d="M4.5 3V15.9M3.0 14.4H17.4" stroke="#555" stroke-width="1.1" fill="none"/><path d="M2.5 4.5L4.5 2L6.5 4.5Z" fill="#555"/><path d="M15.899999999999999 12.4L18.4 14.4L15.899999999999999 16.4Z" fill="#555"/><path d="M13.4 1.6H17.6L15.5 4.2Z" fill="#0000ff"/><path d="M3.4 17.6H7.6L5.5 15Z" fill="#ff0000"/></svg></div>
<!-- bottom bar -->
<div class="btn" style="left:10px;top:908px"><svg width="25" height="21" viewBox="0 0 25 21"><path d="M13 2.6C16.5 2.6 19.2 5.2 19.2 8.6C19.2 12 16.5 14.6 13 14.6C12 14.6 11.1 14.4 10.3 14C8.9 15.4 7 16.4 4.8 16.8C6.2 15.6 7.2 14 7.6 12.2C7.1 11.2 6.8 9.9 6.8 8.6C6.8 5.2 9.5 2.6 13 2.6Z" fill="#5e5e5e"/><text x="13" y="12.6" font-size="11" font-weight="bold" text-anchor="middle" fill="#fff">?</text></svg></div>
<div class="btn" style="left:45px;top:908px"><svg width="25" height="21" viewBox="0 0 25 21"><rect x="4" y="2.3" width="16" height="4.4" fill="#7ed45e"/><path d="M6 4.4v2.3M8 4.4v2.3M10 4.4v2.3M12 4.4v2.3M14 4.4v2.3M16 4.4v2.3M18 4.4v2.3" stroke="#4a9a3a" stroke-width="0.8" fill="none"/><text y="15.1" font-size="10.4" font-weight="bold" fill="#111"><tspan x="3.4" textLength="7.8" lengthAdjust="spacingAndGlyphs">0.</tspan><tspan x="11" font-weight="normal" fill="#3366ee" stroke="#3366ee" stroke-width="0.3" textLength="9.2" lengthAdjust="spacingAndGlyphs">00</tspan></text><path d="M11 16.6h9.4" stroke="#3366ee" stroke-width="1" fill="none"/></svg></div>
<div class="a" style="left:80px;top:908px;width:21px;height:21px;background:#7ab800;border:1px solid #000"></div>
<div class="btn" style="left:104px;top:908px"><svg width="25" height="21" viewBox="0 0 25 21"><defs><linearGradient id="wg" x1="0" y1="0" x2="1" y2="1"><stop offset="0" stop-color="#ffffff"/><stop offset="1" stop-color="#d4d4d4"/></linearGradient></defs><rect x="4" y="2.2" width="7" height="6.4" fill="#9a9a9a"/><rect x="4.6" y="2.8" width="2.6" height="2.4" fill="#ff1010"/><rect x="7.8" y="2.8" width="2.6" height="2.4" fill="#ffee00"/><rect x="4.6" y="5.8" width="2.6" height="2.4" fill="#10dd20"/><rect x="7.8" y="5.8" width="2.6" height="2.4" fill="#4060ff"/><text x="7.2" y="16.6" font-size="9.5" font-weight="bold" text-anchor="middle" fill="#111">A</text><path d="M4 18h2M7 18h2M10 18h2.4" stroke="#111" stroke-width="1.4" fill="none"/><rect x="11.8" y="7.4" width="8" height="6" fill="url(#wg)" stroke="#777" stroke-width="0.8"/><rect x="13.6" y="7.6" width="6" height="1.8" fill="#2a3cc0"/></svg></div>
<div class="btn" style="left:139px;top:908px;background:#e5e5e5"><svg width="25" height="21" viewBox="0 0 25 21"><text x="3.4" y="16.4" font-size="15" font-style="italic" class="sf" fill="#5c5c5c" stroke="#5c5c5c">f<tspan x="10.4" y="16.2" font-size="12.5">x</tspan></text><path d="M11.4 5.2C13.4 2.4 17.4 2.4 19.4 5.2C17.4 8 13.4 8 11.4 5.2Z" fill="none" stroke="#6a6a6a" stroke-width="0.9"/><circle cx="15.4" cy="5.2" r="1.5" fill="#6a6a6a"/></svg></div>
<div class="pbtn" style="left:1037px"></div>
<div class="pbtn" style="left:1128px"></div>
<div class="pbtn" style="left:1219px"></div>
<div class="t" style="left:1069.70px;top:911.82px"><span class="w" style="width:15.90px;transform:scaleX(0.957)">OK</span></div>
<div class="t" style="left:1139.40px;top:911.82px"><span class="w" style="width:56.70px;transform:scaleX(1.019)">Abbrechen</span></div>
<div class="t" style="left:1230.40px;top:911.82px"><span class="w" style="width:56.50px;transform:scaleX(1.040)">Anwenden</span></div>
<svg class="a" style="left:1298px;top:929px;width:10px;height:10px" viewBox="0 0 10 10"><g fill="#a3a3a3"><rect x="7" y="1" width="2" height="2"/><rect x="4" y="4" width="2" height="2"/><rect x="7" y="4" width="2" height="2"/><rect x="1" y="7" width="2" height="2"/><rect x="4" y="7" width="2" height="2"/><rect x="7" y="7" width="2" height="2"/></g></svg>
<div class="a" style="left:0;top:0;width:1311px;height:941px;border:1px solid #6e6e6e;pointer-events:none"></div>
</div>
</body>
</html>
